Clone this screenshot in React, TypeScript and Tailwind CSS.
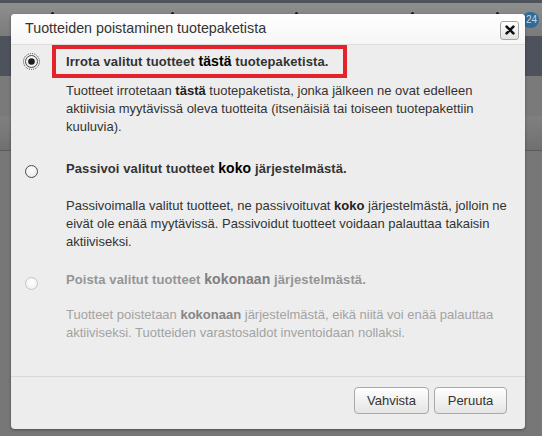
import React from "react";

const font = { fontFamily: '"Liberation Sans", Arial, sans-serif' };

function Radio({ checked, disabled }: { checked?: boolean; disabled?: boolean }) {
  return (
    <svg width="17" height="17" viewBox="0 0 17 17" className="block">
      <defs>
        <radialGradient id={disabled ? "rgd" : "rg"} cx="50%" cy="40%" r="60%">
          <stop offset="0%" stopColor="#ffffff" />
          <stop offset="100%" stopColor={disabled ? "#f0f0f0" : "#e9e9e9"} />
        </radialGradient>
      </defs>
      {checked && (
        <circle cx="8.5" cy="8.5" r="8" fill="none" stroke="#444" strokeWidth="1" strokeDasharray="1 1" />
      )}
      <circle
        cx="8.5"
        cy="8.5"
        r="6"
        fill={`url(#${disabled ? "rgd" : "rg"})`}
        stroke={disabled ? "#c4c4c4" : "#4a4a4a"}
        strokeWidth="1"
      />
      {checked && <circle cx="8.5" cy="8.5" r="3.3" fill="#1c1c1c" />}
    </svg>
  );
}

function Btn({ children, w }: { children: React.ReactNode; w: string }) {
  return (
    <button
      className={`${w} h-[27px] rounded-[4px] border border-[#a9a9a9] bg-gradient-to-b from-[#ffffff] to-[#e4e4e4] text-[13px] text-[#333] shadow-[inset_0_1px_0_#fff]`}
      style={font}
    >
      {children}
    </button>
  );
}

export default function App() {
  return (
    <div className="relative w-[542px] h-[436px] overflow-hidden bg-[#777777]" style={font}>
      {/* background page under overlay */}
      <div className="h-[3px] bg-[#4f535b]" />
      <div className="relative h-[33px] bg-gradient-to-b from-[#8e8e8e] to-[#7b7b7b]">
        <span className="absolute left-[51px] top-[9px] w-[3px] h-[3px] rounded-full bg-[#1a1a1a]" />
        <span className="absolute left-[171px] top-[9px] w-[3px] h-[3px] rounded-full bg-[#1a1a1a]" />
        <span className="absolute left-[295px] top-[9px] w-[3px] h-[3px] rounded-full bg-[#1a1a1a]" />
        <span className="absolute left-[411px] top-[9px] w-[3px] h-[3px] rounded-full bg-[#1a1a1a]" />
        <span className="absolute left-[496px] top-[9px] w-[3px] h-[3px] rounded-full bg-[#1a1a1a]" />
        <span className="absolute left-[522px] top-[9px] w-[17px] h-[16px] rounded-full bg-[#2f6c99] text-[10px] leading-[16px] text-[#c9d6e2] text-right pr-[2px]">
          24
        </span>
      </div>
      <div className="h-[40px] bg-[#4e525c]" />
      <div className="h-[40px] bg-[#7a7a7a]" />
      <div className="h-[34px] bg-gradient-to-b from-[#808080] to-[#707070]" />
      <div className="h-[1px] bg-[#5c5c5c]" />

      {/* dialog */}
      <div className="absolute left-[11px] top-[14px] w-[514px] h-[415px] flex flex-col rounded-[4px] bg-[#ededed] shadow-[0_1px_3px_rgba(0,0,0,0.35)] overflow-hidden">
        <div className="h-[31px] shrink-0 flex items-center justify-between border-b border-[#dcdcdc] bg-gradient-to-b from-[#ffffff] to-[#f6f6f6] pl-[14px] pr-[6px]">
          <span className="text-[14.3px] text-[#333]">Tuotteiden poistaminen tuotepaketista</span>
          <span className="mt-[2px] w-[19px] h-[19px] flex items-center justify-center rounded-[3px] border border-[#a5a5a5] bg-gradient-to-b from-[#ffffff] to-[#e2e2e2]">
            <svg width="10" height="10" viewBox="0 0 10 10">
              <path d="M1.6 1.6 L8.4 8.4 M8.4 1.6 L1.6 8.4" stroke="#111" strokeWidth="2.6" strokeLinecap="round" />
            </svg>
          </span>
        </div>

        <div className="flex-1 border-b border-[#d8d8d8]">
          {/* option 1 */}
          <div className="flex pl-[12px]">
            <div className="w-[17px] mt-[8px]">
              <Radio checked />
            </div>
            <div className="ml-[12px] flex-1">
              <div className="inline-block border-[4px] border-[#e3222b] pl-[10px] pr-[14px] h-[33px] leading-[25px] text-[13px] font-bold tracking-[0.1px] text-[#333]">
                Irrota valitut tuotteet <span className="text-[14px] text-[#000]">tästä</span> tuotepaketista.
              </div>
              <p className="mt-[4px] pl-[14px] pr-[18px] text-[13px] leading-[18px] text-[#333]">
                Tuotteet irrotetaan <b className="text-[#222]">tästä</b> tuotepaketista, jonka jälkeen ne ovat edelleen aktiivisia myytävissä oleva tuotteita (itsenäisiä tai toiseen tuotepakettiin kuuluvia).
              </p>
            </div>
          </div>

          {/* option 2 */}
          <div className="flex pl-[12px] mt-[23px]">
            <div className="w-[17px] mt-[4px]">
              <Radio />
            </div>
            <div className="ml-[26px] flex-1 pr-[18px]">
              <div className="text-[13px] leading-[18px] font-bold tracking-[0.1px] text-[#333]">
                Passivoi valitut tuotteet <span className="text-[14px] text-[#000]">koko</span> järjestelmästä.
              </div>
              <p className="mt-[19px] text-[13px] leading-[18px] text-[#333]">
                Passivoimalla valitut tuotteet, ne passivoituvat <b className="text-[#222]">koko</b> järjestelmästä, jolloin ne eivät ole enää myytävissä. Passivoidut tuotteet voidaan palauttaa takaisin aktiiviseksi.
              </p>
            </div>
          </div>

          {/* option 3 */}
          <div className="flex pl-[12px] mt-[19px]">
            <div className="w-[17px] mt-[5px]">
              <Radio disabled />
            </div>
            <div className="ml-[26px] flex-1 pr-[18px]">
              <div className="text-[13px] leading-[18px] font-bold tracking-[0.1px] text-[#959595]">
                Poista valitut tuotteet <span className="text-[14px] text-[#7e7e7e]">kokonaan</span> järjestelmästä.
              </div>
              <p className="mt-[17px] text-[13px] leading-[18px] text-[#a3a3a3]">
                Tuotteet poistetaan <b className="text-[#858585]">kokonaan</b> järjestelmästä, eikä niitä voi enää palauttaa aktiiviseksi. Tuotteiden varastosaldot inventoidaan nollaksi.
              </p>
            </div>
          </div>
        </div>

        <div className="h-[52px] shrink-0 flex justify-end items-start pt-[10px] pr-[18px] gap-[5px]">
          <Btn w="w-[75px]">Vahvista</Btn>
          <Btn w="w-[73px]">Peruuta</Btn>
        </div>
      </div>
    </div>
  );
}
